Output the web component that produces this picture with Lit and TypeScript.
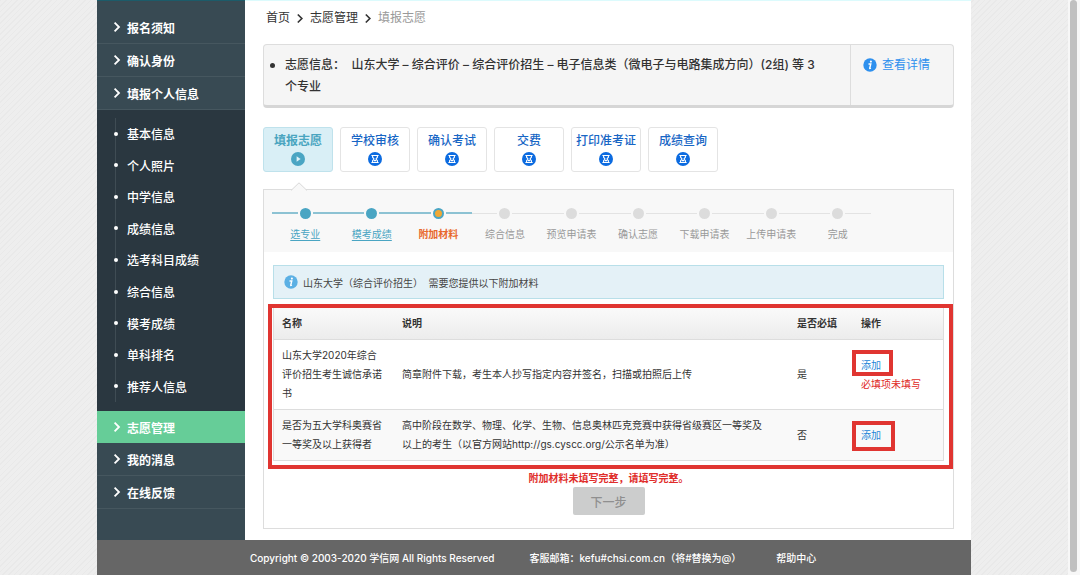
import { LitElement, html, css, svg } from "lit";
import { customElement, property } from "lit/decorators.js";
import { classMap } from "lit/directives/class-map.js";

const chevron = html`<svg class="chevron" viewBox="0 0 8 12" aria-hidden="true">
  <path d="M1.6 1.6 L6 6 L1.6 10.4" fill="none" stroke="currentColor" stroke-width="1.8" />
</svg>`;

const infoIcon = html`<svg class="info-icon" viewBox="0 0 14 14" aria-hidden="true">
  <circle cx="7" cy="7" r="6.7" fill="currentColor" />
  <circle cx="7.9" cy="3.6" r="1.05" fill="#fff" />
  <path d="M5.5 6h2.3L6.7 10.2q-.1.5 1.2-.1" fill="none" stroke="#fff" stroke-width="1.4" />
</svg>`;

const playShape = svg`<path d="M5.6 4.2 L9.6 7 L5.6 9.8 Z" fill="#dff2f8" />`;
const hourglassShape = svg`<path d="M3.4 3.5h7.2M3.4 10.5h7.2M4.6 4v1.2L6 7L4.6 8.8V10M9.4 4v1.2L8 7L9.4 8.8V10M6 8.6h2"
  fill="none" stroke="#fff" stroke-width="1.1" />`;

@customElement("side-menu")
class SideMenu extends LitElement {
  static styles = css`
    :host { display: block; background: #384a53; color: #fff; font-size: 12px; box-sizing: border-box; }
    ul { list-style: none; margin: 0; padding: 0; }
    a { color: inherit; text-decoration: none; }
    .item { display: flex; align-items: center; gap: 6px; height: 32px; padding-left: 16px; font-weight: 700; border-bottom: 1px solid #46575f; }
    .item.active { background: #66cd98; border-bottom: 0; }
    .chevron { width: 8px; height: 12px; }
    .sub { background: #2a3740; padding: 8px 0 9px 18px; }
    .sub ul { display: grid; grid-auto-rows: 1fr; height: 284px; border-left: 1px solid #3f4c54; }
    .sub li { display: flex; align-items: center; font-weight: 500; }
    .dot { width: 4px; height: 4px; border-radius: 50%; background: #fff; margin: 0 9px 0 -2px; }
  `;

  top = ["报名须知", "确认身份", "填报个人信息"];
  sub = ["基本信息", "个人照片", "中学信息", "成绩信息", "选考科目成绩", "综合信息", "模考成绩", "单科排名", "推荐人信息"];
  bottom = ["志愿管理", "我的消息", "在线反馈"];

  entry(label: string, active = false) {
    return html`<a href="#" class=${classMap({ item: true, active })}>${chevron}${label}</a>`;
  }

  render() {
    return html`<nav>
      ${this.top.map((l) => this.entry(l))}
      <div class="sub"><ul>${this.sub.map((l) => html`<li><span class="dot"></span><a href="#">${l}</a></li>`)}</ul></div>
      ${this.bottom.map((l, i) => this.entry(l, i === 0))}
    </nav>`;
  }
}

@customElement("stage-tabs")
class StageTabs extends LitElement {
  static styles = css`
    :host { display: block; }
    .tabs { display: flex; gap: 7px; }
    button { display: flex; flex-direction: column; align-items: center; width: 70px; height: 45px; padding: 3px 0 0; box-sizing: border-box;
      border: 1px solid #e4e4e4; border-radius: 3px; background: #fff; color: #1766c5; font: inherit; font-size: 12px; font-weight: 500; line-height: 20px; white-space: nowrap; cursor: pointer; }
    button.active { background: #d9eff6; border-color: #bfe2ec; color: #4aa5c0; font-weight: 700; }
    svg { width: 14px; height: 14px; color: #0c6be0; margin-top: 1px; }
    .active svg { color: #4aa5c3; }
  `;
  tabs = ["填报志愿", "学校审核", "确认考试", "交费", "打印准考证", "成绩查询"];
  render() {
    return html`<div class="tabs">${this.tabs.map(
      (t, i) => html`<button type="button" class=${classMap({ active: i === 0 })}>${t}
        <svg viewBox="0 0 14 14" aria-hidden="true"><circle cx="7" cy="7" r="7" fill="currentColor" />${i === 0 ? playShape : hourglassShape}</svg>
      </button>`
    )}</div>`;
  }
}

@customElement("step-track")
class StepTrack extends LitElement {
  static styles = css`
    :host { display: block; background: #f8f8f8; padding: 17px 8px 9px; }
    ol { list-style: none; margin: 0; padding: 0; display: grid; grid-template-columns: repeat(9, 1fr); max-width: 599px; }
    li { text-align: center; color: #999; font-size: 10px; white-space: nowrap; }
    .rail { display: flex; align-items: center; gap: 2px; height: 12px; }
    .rail::before, .rail::after { content: ""; flex: 1; height: 1px; background: #e3e3e3; }
    .dot { width: 11px; height: 11px; box-sizing: border-box; border-radius: 50%; background: #dcdcdc; }
    .reached .rail::before, .reached .rail::after { background: #8cc2d3; height: 2px; }
    .reached .dot { background: #4aa5c3; }
    .current .dot { background: #f0a835; border: 2px solid #4aa5c3; }
    .label { display: block; line-height: 18px; margin-top: 6px; }
    a { color: #4aa5c3; text-decoration: underline; text-underline-offset: 2px; }
    .current { color: #e8682c; font-weight: 700; }
  `;
  @property({ type: Number }) current = 2;
  steps = ["选专业", "模考成绩", "附加材料", "综合信息", "预览申请表", "确认志愿", "下载申请表", "上传申请表", "完成"];
  render() {
    return html`<ol>${this.steps.map(
      (s, i) => html`<li class=${classMap({ reached: i <= this.current, current: i === this.current })}>
        <div class="rail"><span class="dot"></span></div>
        <span class="label">${i < this.current ? html`<a href="#">${s}</a>` : s}</span>
      </li>`
    )}</ol>`;
  }
}

@customElement("material-table")
class MaterialTable extends LitElement {
  static styles = css`
    :host { display: block; position: relative; font-size: 10px; color: #333; }
    .frame { position: absolute; inset: -4px -9px -8px -5px; border: 4px solid #e03531; pointer-events: none; }
    table { width: 100%; border-collapse: separate; border-spacing: 0; table-layout: fixed; border: solid #ddd; border-width: 0 1px; }
    th, td { text-align: left; padding: 6px 8px; line-height: 19px; border-bottom: 1px solid #ddd; font-weight: 400; }
    th { font-weight: 700; background: linear-gradient(#fafafa, #ececec); white-space: nowrap; }
    tr.alt td { background: #f9f9f9; }
    .c-name { width: 120px; }
    .c-need { width: 64px; }
    .c-act { width: 90px; }
    td.desc { padding-right: 24px; }
    a { color: #2386d8; text-decoration: none; position: relative; }
    .mark { position: absolute; inset: -8px -14px -10px -9px; border: 4px solid #e03531; pointer-events: none; }
    .required .mark { inset: -9px -12px -5px -9px; }
    .missing { display: block; color: #e02a26; }
  `;
  rows = [
    { name: "山东大学2020年综合评价招生考生诚信承诺书", desc: "简章附件下载，考生本人抄写指定内容并签名，扫描或拍照后上传", need: true },
    { name: "是否为五大学科奥赛省一等奖及以上获得者", desc: "高中阶段在数学、物理、化学、生物、信息奥林匹克竞赛中获得省级赛区一等奖及以上的考生（以官方网站http://gs.cyscc.org/公示名单为准）", need: false },
  ];
  render() {
    return html`<table>
        <colgroup><col class="c-name" /><col /><col class="c-need" /><col class="c-act" /></colgroup>
        <thead><tr><th>名称</th><th>说明</th><th>是否必填</th><th>操作</th></tr></thead>
        <tbody>${this.rows.map(
          (r, i) => html`<tr class=${classMap({ alt: i % 2 === 1, required: r.need })}>
            <td>${r.name}</td><td class="desc">${r.desc}</td><td>${r.need ? "是" : "否"}</td>
            <td><a href="#">添加<span class="mark"></span></a>${r.need ? html`<span class="missing">必填项未填写</span>` : ""}</td>
          </tr>`
        )}</tbody>
      </table>
      <div class="frame"></div>`;
  }
}

@customElement("app-root")
class AppRoot extends LitElement {
  static styles = css`
    :host { display: flex; min-height: 100vh; font-family: Inter, "Noto Sans CJK SC", sans-serif; color: #333;
      background: repeating-linear-gradient(135deg, #e9e9e9 0 1px, #eeeeee 1px 4px); }
    a { text-decoration: none; color: inherit; }
    .page { flex: 1; display: flex; flex-direction: column; max-width: 874px; margin: 0 auto; }
    .columns { flex: 1; display: grid; grid-template-columns: 148px minmax(0, 1fr); background: #fff; }
    side-menu { border-top: 1px solid #1c5b69; padding-top: 10px; }
    main { padding: 7px 17px 11px 18px; border-top: 1px solid #dcfbfd; }
    .crumbs { display: flex; align-items: center; gap: 6px; padding-left: 3px; font-size: 12px; line-height: 20px; }
    .crumbs .last { color: #999; }
    .chevron { width: 8px; height: 11px; }
    .summary { display: flex; margin-top: 16px; border: 1px solid #ddd; border-bottom: 3px solid #d6d6d6; border-radius: 4px; background: #f5f5f5; font-size: 12px; line-height: 22px; }
    .summary .text { flex: 1; display: flex; gap: 10px; padding: 9px 26px 7px 6px; font-weight: 500; }
    .bullet { flex: none; width: 5px; height: 5px; border-radius: 50%; background: #333; margin-top: 9px; }
    .summary .more { width: 90px; padding: 9px 0 7px 12px; border-left: 1px solid #ddd; }
    .more a { display: flex; align-items: center; gap: 5px; color: #2e90ee; }
    .info-icon { width: 14px; height: 14px; flex: none; }
    stage-tabs { margin-top: 19px; }
    .panel { position: relative; margin-top: 17px; border: 1px solid #ddd; padding-bottom: 13px; }
    .notch { position: absolute; left: 27px; top: -8px; width: 16px; height: 9px; }
    .notice { display: flex; align-items: center; gap: 5px; margin: 13px 9px 9px; height: 32px; padding: 0 10px; border: 1px solid #b8dfe9; background: #e4f1f7; font-size: 10px; color: #444; }
    .notice .info-icon { color: #5bb0e4; }
    material-table { margin: 0 9px; }
    .actions { display: flex; flex-direction: column; align-items: center; margin-top: 8px; }
    .error { margin: 0; color: #df2d2a; font-size: 10px; font-weight: 700; line-height: 18px; }
    button { width: 72px; height: 28px; border: 0; border-radius: 2px; background: #cccdcd; color: #8f8f8f; font: inherit; font-size: 12px; font-weight: 500; padding: 0; }
    footer { display: flex; align-items: center; gap: 35px; height: 35px; padding-left: 153px; background: #666; color: #fff; font-size: 10px; font-weight: 500; white-space: nowrap; }
    .scroll { width: 12px; box-sizing: border-box; padding: 0 3px 3px 2px; background: #f7f7f7; display: flex; }
    .thumb { flex: 1; border-radius: 4px; background: #c0c0c0; }
  `;
  render() {
    return html`
      <div class="page">
        <div class="columns">
          <side-menu></side-menu>
          <main>
            <nav class="crumbs"><a href="#">首页</a>${chevron}<a href="#">志愿管理</a>${chevron}<span class="last">填报志愿</span></nav>
            <section class="summary">
              <div class="text"><span class="bullet"></span>
                <div>志愿信息：&nbsp; 山东大学 – 综合评价 – 综合评价招生 – 电子信息类（微电子与电路集成方向）(2组) 等 3 个专业</div>
              </div>
              <div class="more"><a href="#">${infoIcon}查看详情</a></div>
            </section>
            <stage-tabs></stage-tabs>
            <section class="panel">
              <svg class="notch" viewBox="0 0 16 9" aria-hidden="true"><path d="M0 8.5 L8 .8 L16 8.5" fill="#f8f8f8" stroke="#d8d8d8" /></svg>
              <step-track .current=${2}></step-track>
              <div class="notice">${infoIcon}<span>山东大学（综合评价招生）&nbsp; 需要您提供以下附加材料</span></div>
              <material-table></material-table>
              <div class="actions">
                <p class="error">附加材料未填写完整，请填写完整。</p>
                <button type="button" disabled>下一步</button>
              </div>
            </section>
          </main>
        </div>
        <footer><span>Copyright © 2003-2020 学信网 All Rights Reserved</span><span>客服邮箱：kefu#chsi.com.cn（将#替换为@）</span><a href="#">帮助中心</a></footer>
      </div>
      <div class="scroll"><div class="thumb"></div></div>`;
  }
}
